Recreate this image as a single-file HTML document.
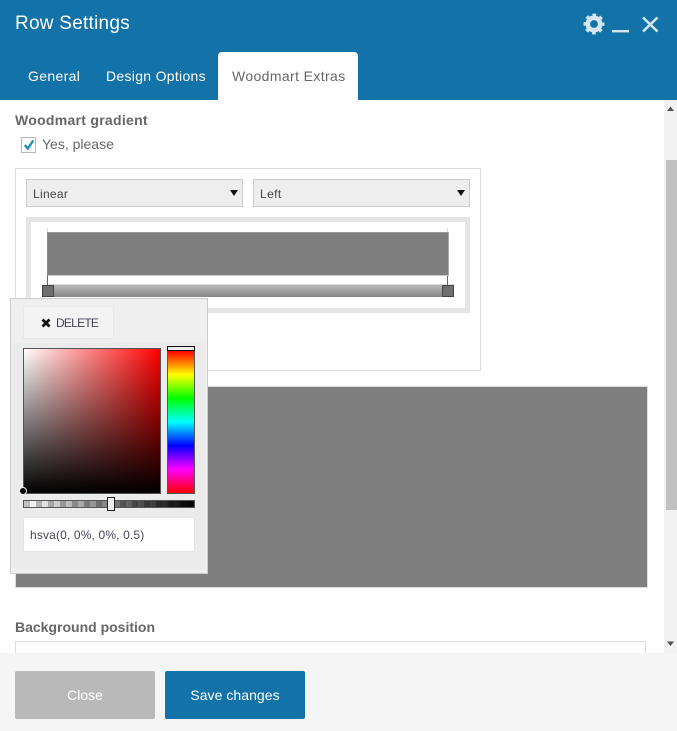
<!DOCTYPE html>
<html><head><meta charset="utf-8">
<style>
html,body{margin:0;padding:0;background:#fff}
body{width:677px;height:731px;position:relative;overflow:hidden;font-family:"Liberation Sans",sans-serif;color:#555}
.a{position:absolute;box-sizing:border-box}
.t{position:absolute;white-space:nowrap;line-height:20px}
</style></head><body>
<div class="a" style="left:0;top:0;width:677px;height:100px;background:#1372a8"></div>
<div class="t" style="left:15px;top:14px;font-size:19px;color:#fff;letter-spacing:.25px">Row Settings</div>
<svg class="a" style="left:580px;top:10px" width="90" height="30" viewBox="580 10 90 30">
<circle cx="594" cy="24" r="6.2" fill="none" stroke="#d3e6f1" stroke-width="4.6"/>
<circle cx="594" cy="24" r="9" fill="none" stroke="#d3e6f1" stroke-width="3" stroke-dasharray="3.6 3.47" stroke-dashoffset="1.8"/>
<rect x="612" y="30" width="17" height="2.4" fill="#d3e6f1"/>
<path d="M643 17.5L657.5 31.5M657.5 17.5L643 31.5" stroke="#d3e6f1" stroke-width="2.6" fill="none"/>
</svg>
<div class="t" style="left:28px;top:66px;font-size:14px;color:#fff;letter-spacing:.35px">General</div>
<div class="t" style="left:106px;top:66px;font-size:14px;color:#fff;letter-spacing:.3px">Design Options</div>
<div class="a" style="left:218px;top:52px;width:140px;height:48px;background:#fff;border-radius:4px 4px 0 0"></div>
<div class="t" style="left:232px;top:66px;font-size:14px;color:#666;letter-spacing:.38px">Woodmart Extras</div>

<div class="a" style="left:664px;top:100px;width:13px;height:553px;background:#f1f1f1"></div>
<div class="a" style="left:666px;top:160px;width:11px;height:350px;background:#c1c1c1"></div>
<svg class="a" style="left:664px;top:100px" width="13" height="553">
<path d="M3 11L6.500 6.500L10 11Z" fill="#505050"/><path d="M3 541.500H10L6.500 546Z" fill="#505050"/></svg>

<div class="t" style="left:15px;top:110px;font-size:14px;font-weight:bold;color:#666;letter-spacing:.28px">Woodmart gradient</div>
<div class="a" style="left:21px;top:137px;width:15px;height:16px;background:#fff;border:1px solid #b4b9be"></div>
<svg class="a" style="left:21px;top:137px" width="16" height="16"><path d="M3.800 8L6.800 11.500L12.300 3.500" fill="none" stroke="#1e8cbe" stroke-width="2.400"/></svg>
<div class="t" style="left:42px;top:134px;font-size:14px;color:#666;letter-spacing:0">Yes, please</div>

<div class="a" style="left:15px;top:168px;width:466px;height:203px;border:1px solid #ddd;background:#fff"></div>
<div class="a" style="left:26px;top:179px;width:217px;height:28px;background:#eee;border:1px solid #ccc"></div>
<div class="t" style="left:33px;top:184px;font-size:12px;color:#444;letter-spacing:.3px">Linear</div>
<div class="a" style="left:253px;top:179px;width:217px;height:28px;background:#eee;border:1px solid #ccc"></div>
<div class="t" style="left:260px;top:184px;font-size:12px;color:#444;letter-spacing:.4px">Left</div>
<svg class="a" style="left:0;top:180px" width="480" height="26"><path d="M230 10H238L234 16Z M457 10H465L461 16Z" fill="#111"/></svg>

<div class="a" style="left:26px;top:217px;width:444px;height:96px;border:5px solid #e5e5e5;background:#fff"></div>
<div class="a" style="left:47px;top:232px;width:402px;height:44px;background:#7f7f7f;border-top:1px solid #999;border-bottom:1px solid #c8c8c8;border-right:1px solid #aaa"></div>
<div class="a" style="left:47px;top:284px;width:407px;height:13px;background:linear-gradient(#ddd 0,#ddd 1px,#b8b8b8 1px,#868686)"></div>
<div class="a" style="left:47px;top:228px;width:1px;height:4px;background:#ddd"></div>
<div class="a" style="left:47px;top:232px;width:1px;height:44px;background:#8c8c8c"></div>
<div class="a" style="left:47px;top:276px;width:1px;height:9px;background:#666"></div>
<div class="a" style="left:447px;top:228px;width:1px;height:4px;background:#ddd"></div>
<div class="a" style="left:447px;top:276px;width:1px;height:9px;background:#666"></div>
<div class="a" style="left:42px;top:285px;width:12px;height:12px;background:#6e6e6e;border:1px solid #444"></div>
<div class="a" style="left:442px;top:285px;width:12px;height:12px;background:#6e6e6e;border:1px solid #444"></div>

<div class="a" style="left:15px;top:386px;width:633px;height:202px;background:#7f7f7f;border:1px solid #ddd"></div>

<div class="a" style="left:10px;top:298px;width:198px;height:276px;background:#efefef;border:1px solid #ccc"></div>
<div class="a" style="left:13px;top:343px;width:192px;height:226px;background:#ebebeb"></div>
<div class="a" style="left:23px;top:306px;width:91px;height:33px;background:#f3f3f3;border:1px solid #e8e8e8"></div>
<svg class="a" style="left:41px;top:318px" width="10" height="10"><path d="M1.500 1.500L8.500 8.500M8.500 1.500L1.500 8.500" stroke="#111" stroke-width="2.800"/></svg>
<div class="t" style="left:56px;top:313px;font-size:12px;color:#445;letter-spacing:-.75px">DELETE</div>
<div class="a" style="left:23px;top:348px;width:138px;height:146px;border:1px solid #555;background:linear-gradient(to top,#000,transparent),linear-gradient(to right,#fff,#f00)"></div>
<div class="a" style="left:167px;top:350px;width:28px;height:144px;border:1px solid #555;background:linear-gradient(#f00,#ff0 16.7%,#0f0 33.3%,#0ff 50%,#00f 66.7%,#f0f 83.3%,#f00)"></div>
<div class="a" style="left:167px;top:346px;width:28px;height:5px;background:#eee;border:1px solid #111"></div>
<div class="a" style="left:20px;top:488px;width:6px;height:6px;border-radius:50%;background:#000;box-shadow:0 0 0 1px #eee"></div>
<div class="a" style="left:23px;top:500px;width:172px;height:8px;border:1px solid #555;background:linear-gradient(to right,transparent,#000),repeating-conic-gradient(#fff 0 25%,#c4c4c4 0 50%) 0 0/12px 12px"></div>
<div class="a" style="left:107px;top:497px;width:8px;height:14px;background:#eee;border:1px solid #222"></div>
<div class="a" style="left:23px;top:517px;width:172px;height:35px;background:#fff;border:1px solid #e5e5e5;border-radius:2px"></div>
<div class="t" style="left:30px;top:525px;font-size:12px;color:#445;letter-spacing:.15px">hsva(0, 0%, 0%, 0.5)</div>

<div class="t" style="left:15px;top:617px;font-size:14px;font-weight:bold;color:#666;letter-spacing:0">Background position</div>
<div class="a" style="left:15px;top:641px;width:631px;height:20px;border:1px solid #ddd;background:#fff"></div>

<div class="a" style="left:0;top:653px;width:677px;height:78px;background:#f5f5f5"></div>
<div class="a" style="left:15px;top:671px;width:140px;height:48px;background:#b9b9b9;border-radius:2px"></div>
<div class="t" style="left:15px;width:140px;text-align:center;top:685px;font-size:14px;color:#fff">Close</div>
<div class="a" style="left:165px;top:671px;width:140px;height:48px;background:#1372a8;border-radius:2px"></div>
<div class="t" style="left:165px;width:140px;text-align:center;top:685px;font-size:14px;color:#fff;letter-spacing:.05px">Save changes</div>
</body></html>
